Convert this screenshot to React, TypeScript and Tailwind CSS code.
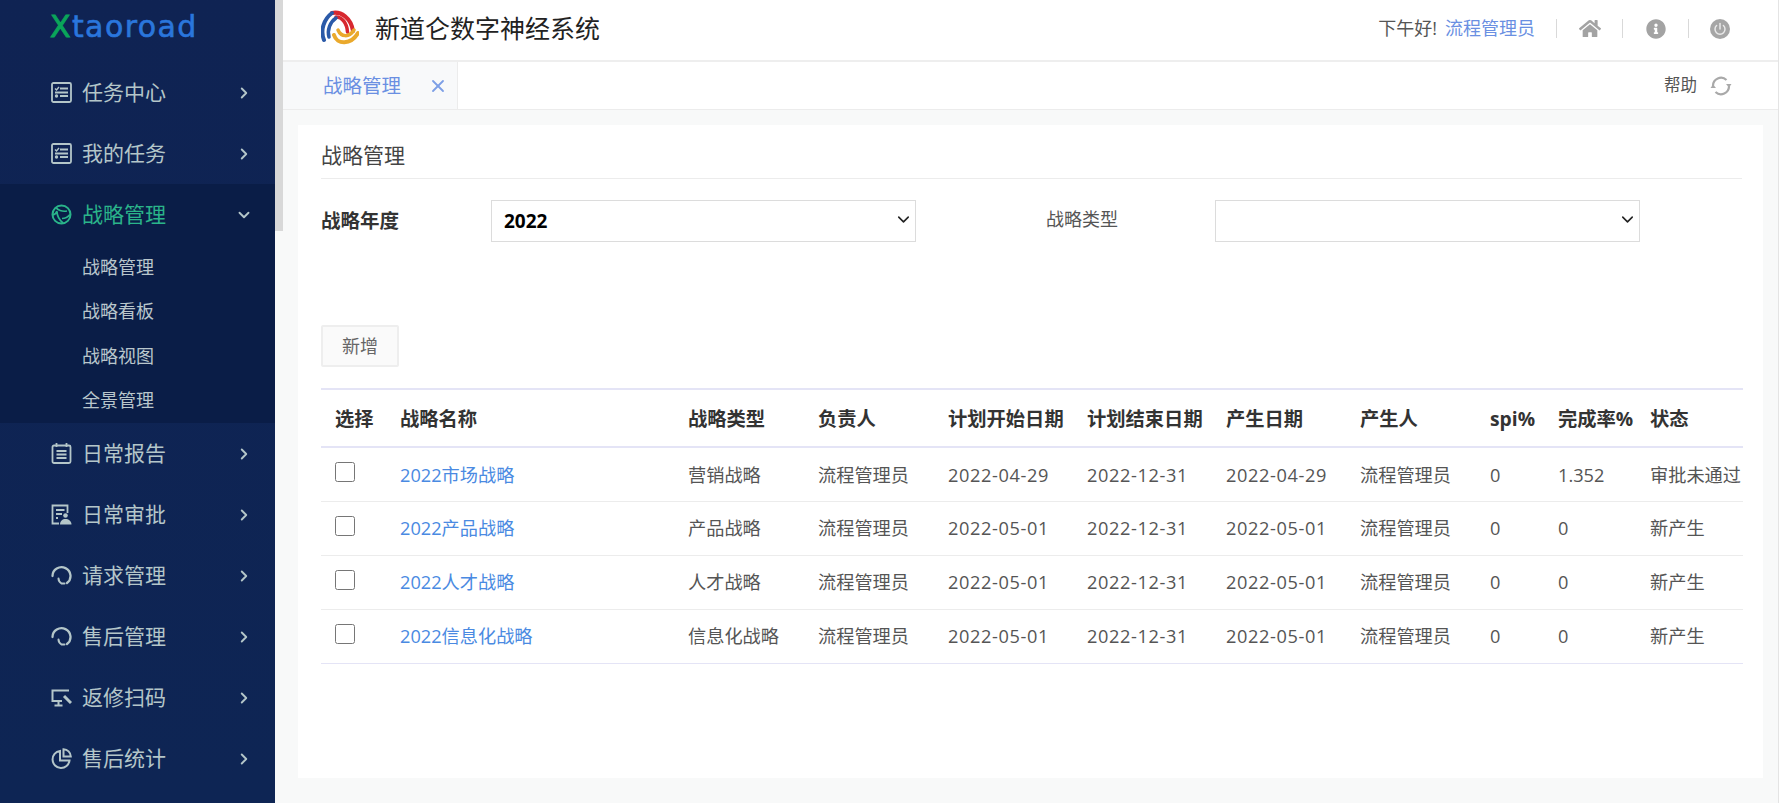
import React from 'react';
import { ChevronRight, ChevronDown, X } from 'lucide-react';
import { FaHome, FaInfoCircle } from 'react-icons/fa';

const FONT = 'font-["Open_Sans","Noto_Sans_CJK_SC",sans-serif]';

const ListIcon = () => (
  <svg width="21" height="21" viewBox="0 0 21 21" fill="none" stroke="currentColor" strokeWidth="1.8">
    <rect x="1" y="1" width="19" height="19" rx="1.5" />
    <path d="M9 6.500h8M9 14h8M4 10.500h13" />
    <path d="M4 6.500l1.500 1.500L8 5" strokeWidth="1.400" />
    <circle cx="5.500" cy="14" r="1.700" fill="currentColor" stroke="none" />
  </svg>
);

const GlobeIcon = () => (
  <svg width="21" height="21" viewBox="0 0 21 21" fill="none" stroke="currentColor" strokeWidth="2">
    <circle cx="10.500" cy="10.500" r="9" />
    <path d="M5 3.500c1.500 2.500 6 4.500 11 3.500M1.500 11c2.500-.5 4-2 4.500-4M6 7.500c0 4.500 2 8 6 11.500M11 14.500c3 0 6-1.500 8-4" strokeWidth="1.700" />
  </svg>
);

const ReportIcon = () => (
  <svg width="21" height="21" viewBox="0 0 21 21" fill="none" stroke="currentColor" strokeWidth="1.800">
    <rect x="1.500" y="2.500" width="18" height="17.500" rx="1.500" />
    <path d="M5.500 0v4M15.500 0v4M5.500 8h10M5.500 11.500h10M5.500 15h10" />
  </svg>
);

const ApproveIcon = () => (
  <svg width="21" height="21" viewBox="0 0 21 21" fill="none" stroke="currentColor" strokeWidth="1.800">
    <path d="M8 19.500H1.500V1.500h15V9" />
    <path d="M5 6h8.500M5 10h6M5 14h2" />
    <circle cx="14.500" cy="11.500" r="2.300" fill="currentColor" stroke="none" />
    <path d="M9 20.500c0-3.500 2.500-5.500 5.500-5.500s6 2 6 5.500z" fill="currentColor" stroke="none" />
  </svg>
);

const RequestIcon = () => (
  <svg width="21" height="21" viewBox="0 0 21 21" fill="none" stroke="currentColor" strokeWidth="2.300" strokeLinecap="round">
    <path d="M1.500 11a9 8.800 0 1 1 14.500 7" />
    <path d="M7.500 13.500c0 2.500 1.500 4 3 5h3" strokeWidth="2" />
  </svg>
);

const ScanIcon = () => (
  <svg width="21" height="21" viewBox="0 0 21 21" fill="none" stroke="currentColor" strokeWidth="2">
    <path d="M11 14H1.500V3.500H18" />
    <path d="M20 16l-7-7" strokeWidth="3" />
    <path d="M7.500 14v3.500M3.500 18.500h8" />
  </svg>
);

const PieIcon = () => (
  <svg width="21" height="21" viewBox="0 0 21 21" fill="none" stroke="currentColor" strokeWidth="2">
    <path d="M9 3a8.500 8.500 0 1 0 9.500 9.500H9z" />
    <path d="M12.500 1.200a7.500 7.500 0 0 1 7.300 7.300h-7.300z" />
  </svg>
);

const CompanyLogo = () => (
  <svg width="38" height="38" viewBox="0 0 38 38" fill="none" strokeLinecap="round">
    <path d="M11 3C20 1 30 8 32 21" stroke="#d7282f" strokeWidth="4" />
    <path d="M15 7c6 0 11 6 11.500 15" stroke="#d7282f" strokeWidth="3.500" />
    <path d="M11 3C3 9-1 20 3 30" stroke="#2b5aa8" strokeWidth="4" />
    <path d="M15 8c-6 4-9 12-7 19" stroke="#2b5aa8" strokeWidth="3.500" />
    <path d="M13 25c3 10 17 10 24-2" stroke="#eaa92c" strokeWidth="4" />
    <path d="M17 20c3 7 11 8 16 0" stroke="#eaa92c" strokeWidth="3.500" />
  </svg>
);

const PowerIcon = () => (
  <svg width="20" height="20" viewBox="0 0 20 20" fill="none">
    <circle cx="10" cy="10" r="10" fill="#a6a6a6" />
    <path d="M6.600 6.500a5 5 0 1 0 6.800 0" stroke="#fff" strokeOpacity=".75" strokeWidth="1.500" strokeLinecap="round" />
    <path d="M10 4.500v5.500" stroke="#fff" strokeOpacity=".75" strokeWidth="1.500" strokeLinecap="round" />
  </svg>
);

const RefreshIcon = () => (
  <svg width="22" height="20" viewBox="0 0 22 20" fill="none" stroke="#a9a9a9" strokeWidth="2.200">
    <path d="M3 10a8 8 0 0 1 13.500-6" />
    <path d="M19 10a8 8 0 0 1-13.500 6" />
    <path d="M16 8h5.500l-2.500 3.500zM.500 12H6L3 8.500z" fill="#a9a9a9" stroke="none" />
  </svg>
);

const menuTop = [
  { label: '任务中心', icon: <ListIcon /> },
  { label: '我的任务', icon: <ListIcon /> },
];

const menuBottom = [
  { label: '日常报告', icon: <ReportIcon /> },
  { label: '日常审批', icon: <ApproveIcon /> },
  { label: '请求管理', icon: <RequestIcon /> },
  { label: '售后管理', icon: <RequestIcon /> },
  { label: '返修扫码', icon: <ScanIcon /> },
  { label: '售后统计', icon: <PieIcon /> },
];

const subMenu = ['战略管理', '战略看板', '战略视图', '全景管理'];

const rows = [
  { name: '2022市场战略', type: '营销战略', start: '2022-04-29', made: '2022-04-29', rate: '1.352', status: '审批未通过' },
  { name: '2022产品战略', type: '产品战略', start: '2022-05-01', made: '2022-05-01', rate: '0', status: '新产生' },
  { name: '2022人才战略', type: '人才战略', start: '2022-05-01', made: '2022-05-01', rate: '0', status: '新产生' },
  { name: '2022信息化战略', type: '信息化战略', start: '2022-05-01', made: '2022-05-01', rate: '0', status: '新产生' },
];

const MenuItem = ({ label, icon }: { label: string; icon: React.ReactNode }) => (
  <div className="flex h-[61px] items-center pl-[51px] pr-[22px] text-[#b4c6c9]">
    <span className="flex w-[31px] shrink-0">{icon}</span>
    <span className="flex-1 text-[21px]">{label}</span>
    <ChevronRight size={18} strokeWidth={2.5} />
  </div>
);

const Sidebar = () => (
  <aside className="flex h-full w-[275px] shrink-0 flex-col bg-gradient-to-b from-[#0f2353] to-[#0e2554]">
    <div className="flex h-[62px] items-start pl-[50px] pt-[7px] font-['DejaVu_Sans',sans-serif] text-[30px] leading-[40px] tracking-[1.4px] text-[#2a76dc] [-webkit-text-stroke:0.6px_#2a76dc]">
      <span className="text-[#0aa55a] [-webkit-text-stroke:1px_#0aa55a]">X</span>taoroad
    </div>
    {menuTop.map((m) => (
      <MenuItem key={m.label} {...m} />
    ))}
    <div className="bg-[#0a1d47]">
      <div className="flex h-[61px] items-center pl-[51px] pr-[22px] text-[#2ab48a]">
        <span className="flex w-[31px] shrink-0">
          <GlobeIcon />
        </span>
        <span className="flex-1 text-[21px]">战略管理</span>
        <ChevronDown size={18} strokeWidth={2.5} className="text-[#b4c6c9]" />
      </div>
      {subMenu.map((s) => (
        <div key={s} className="flex h-[44.5px] items-center pl-[82px] text-[18px] text-[#b9c6cc]">
          {s}
        </div>
      ))}
    </div>
    {menuBottom.map((m) => (
      <MenuItem key={m.label} {...m} />
    ))}
  </aside>
);

const Header = () => (
  <header className="flex h-[62px] shrink-0 items-center border-b-2 border-[#eeeeee] bg-white pb-[3px] pl-[46px] pr-[48px]">
    <CompanyLogo />
    <h1 className="ml-[16px] text-[25px] text-[#222222]">新道仑数字神经系统</h1>
    <div className="ml-auto flex items-center text-[18px]">
      <span className="text-[#555555]">下午好!</span>
      <span className="ml-[8px] text-[#6a8fe2]">流程管理员</span>
      <span className="ml-[21px] h-[19px] w-px bg-[#d9d9d9]" />
      <span className="ml-[22px] mr-[21px] flex w-[22px] justify-center text-[#a3a3a3]">
        <FaHome size={23} />
      </span>
      <span className="h-[19px] w-px bg-[#d9d9d9]" />
      <span className="mx-[22px] flex w-[21px] justify-center text-[#a3a3a3]">
        <FaInfoCircle size={20} />
      </span>
      <span className="h-[19px] w-px bg-[#d9d9d9]" />
      <span className="ml-[20px] flex w-[21px] justify-center">
        <PowerIcon />
      </span>
    </div>
  </header>
);

const TabBar = () => (
  <div className="flex h-[48px] shrink-0 items-stretch border-b border-[#ececec] bg-white pl-[8px] pr-[46px]">
    <div className="flex w-[175px] items-center border-r border-[#ececec] bg-[#f8f9fa] pl-[40px] text-[#6a8fe2]">
      <span className="text-[19.500px]">战略管理</span>
      <X size={20} strokeWidth={2.2} className="ml-[27px] text-[#7d9fe6]" />
    </div>
    <div className="ml-auto flex items-center gap-[13px] text-[16.500px] text-[#555555]">
      <span>帮助</span>
      <RefreshIcon />
    </div>
  </div>
);

const colWidths = ['w-[79px]', 'w-[288px]', 'w-[130px]', 'w-[130px]', 'w-[139px]', 'w-[139px]', 'w-[134px]', 'w-[130px]', 'w-[68px]', 'w-[92px]', 'w-[93px]'];
const headers = ['选择', '战略名称', '战略类型', '负责人', '计划开始日期', '计划结束日期', '产生日期', '产生人', 'spi%', '完成率%', '状态'];

const StrategyTable = () => (
  <table className="w-[1422px] table-fixed border-collapse text-left text-[18.200px] text-[#555555]">
    <thead>
      <tr className="h-[58px] border-y-2 border-[#e4e4f6] text-[#333333]">
        {headers.map((h, i) => (
          <th key={h} className={`${colWidths[i]} ${i === 0 ? 'pl-[14px]' : ''} whitespace-nowrap pt-[2px] text-[19.300px] font-bold`}>
            {h}
          </th>
        ))}
      </tr>
    </thead>
    <tbody>
      {rows.map((r, i) => (
        <tr key={r.name} className={`h-[54px] border-b [&>td]:pt-[2px] ${i === rows.length - 1 ? 'border-[#e4e4f6]' : 'border-[#ececec]'}`}>
          <td className="pl-[14px]">
            <input type="checkbox" className="mb-[6px] block h-[20px] w-[20px]" />
          </td>
          <td className="text-[#4a8ae2]">{r.name}</td>
          <td>{r.type}</td>
          <td>流程管理员</td>
          <td className="tracking-[0.6px]">{r.start}</td>
          <td className="tracking-[0.6px]">2022-12-31</td>
          <td className="tracking-[0.6px]">{r.made}</td>
          <td>流程管理员</td>
          <td>0</td>
          <td>{r.rate}</td>
          <td className="whitespace-nowrap">{r.status}</td>
        </tr>
      ))}
    </tbody>
  </table>
);

const YearSelect = ({ value }: { value?: string }) => (
  <div className="relative w-[425px]">
    <select className="block h-[42px] w-full appearance-none rounded-none border border-[#dcdcdc] pl-[12px] text-[19px] font-bold text-black">
      <option>{value}</option>
    </select>
    <ChevronDown size={19} strokeWidth={2} className="pointer-events-none absolute right-[3px] top-[10px] text-[#222222]" />
  </div>
);

const Content = () => (
  <div className="flex-1 bg-[#f8f9f9] pl-[23px] pr-[15px] pt-[15px]">
    <div className="h-[653px] bg-white pl-[23px] pr-[21px]">
      <div className="flex h-[54px] items-end border-b border-[#ececec] pb-[7px] text-[21px] text-[#444444]">
        战略管理
      </div>
      <div className="mt-[21px] flex items-center">
        <label className="w-[170px] text-[19.500px] font-bold text-[#333333]">战略年度</label>
        <YearSelect value="2022" />
        <label className="mb-[4px] ml-[130px] w-[169px] text-[18px] text-[#555555]">战略类型</label>
        <YearSelect />
      </div>
      <button className="mt-[83px] block h-[42px] w-[78px] rounded-[2px] border-2 border-[#eeeeee] bg-[#fafafa] text-[18px] text-[#666666]">
        新增
      </button>
      <div className="mt-[21px]">
        <StrategyTable />
      </div>
    </div>
  </div>
);

export default function App() {
  return (
    <div className={`flex h-[803px] w-[1779px] overflow-hidden border-r border-[#e4e4e4] ${FONT}`}>
      <Sidebar />
      <main className="relative flex min-w-0 flex-1 flex-col">
        {/* scrollbar thumb */}
        <div className="absolute left-0 top-0 h-[231px] w-[8px] bg-[#d8d8d8]" />
        <Header />
        <TabBar />
        <Content />
      </main>
    </div>
  );
}
